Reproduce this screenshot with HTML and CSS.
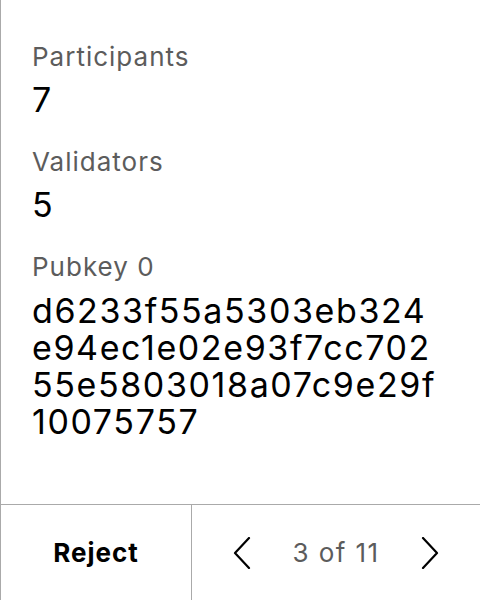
FILE: index.html
```html
<!DOCTYPE html>
<html>
<head>
<meta charset="utf-8">
<link rel="stylesheet" href="styles.css">
</head>
<body>
<div class="screen">
  <div class="content">
    <div class="field">
      <div class="label">Participants</div>
      <div class="value">7</div>
    </div>
    <div class="field">
      <div class="label">Validators</div>
      <div class="value">5</div>
    </div>
    <div class="field">
      <div class="label">Pubkey 0</div>
      <div class="hex">d6233f55a5303eb324<br>e94ec1e02e93f7cc702<br>55e5803018a07c9e29f<br>10075757</div>
    </div>
  </div>
  <div class="footer">
    <div class="reject">Reject</div>
    <div class="pager">
      <svg class="chev" width="18" height="32" viewBox="0 0 18 32"><polyline points="16,1 2,16 16,31" fill="none" stroke="#000" stroke-width="2.2" stroke-linecap="round" stroke-linejoin="round"/></svg>
      <span class="count">3 of 11</span>
      <svg class="chev" width="18" height="32" viewBox="0 0 18 32"><polyline points="2,1 16,16 2,31" fill="none" stroke="#000" stroke-width="2.2" stroke-linecap="round" stroke-linejoin="round"/></svg>
    </div>
  </div>
</div>
</body>
</html>
```
FILE: styles.css
```css
html, body {
  margin: 0;
  padding: 0;
  background: #fff;
}
body {
  font-family: Inter, "Noto Sans", sans-serif;
  color: #000;
}
.screen {
  width: 480px;
  height: 600px;
  box-sizing: border-box;
  border-left: 1px solid #aaaaaa;
  display: flex;
  flex-direction: column;
}
.content {
  flex: 1;
  padding: 42px 0 0 31px;
}
.field {
  margin-bottom: 27px;
}
.label {
  font-size: 26px;
  line-height: 30px;
  letter-spacing: 1px;
  color: #5c5c5c;
}
.value {
  margin-top: 8px;
  font-size: 34px;
  line-height: 40px;
  letter-spacing: 1.5px;
}
.hex {
  margin-top: 10px;
  font-size: 34px;
  line-height: 37px;
  letter-spacing: 1.6px;
}
.footer {
  height: 96px;
  box-sizing: border-box;
  border-top: 1px solid #aaaaaa;
  display: grid;
  grid-template-columns: 191px 1fr;
}
.reject {
  display: flex;
  align-items: center;
  justify-content: center;
  font-size: 26px;
  font-weight: 700;
  letter-spacing: 1px;
  border-right: 1px solid #aaaaaa;
}
.pager {
  display: flex;
  align-items: center;
  justify-content: center;
  gap: 42px;
}
.chev {
  display: block;
}
.count {
  font-size: 26px;
  letter-spacing: 1.4px;
  color: #5c5c5c;
}
```
